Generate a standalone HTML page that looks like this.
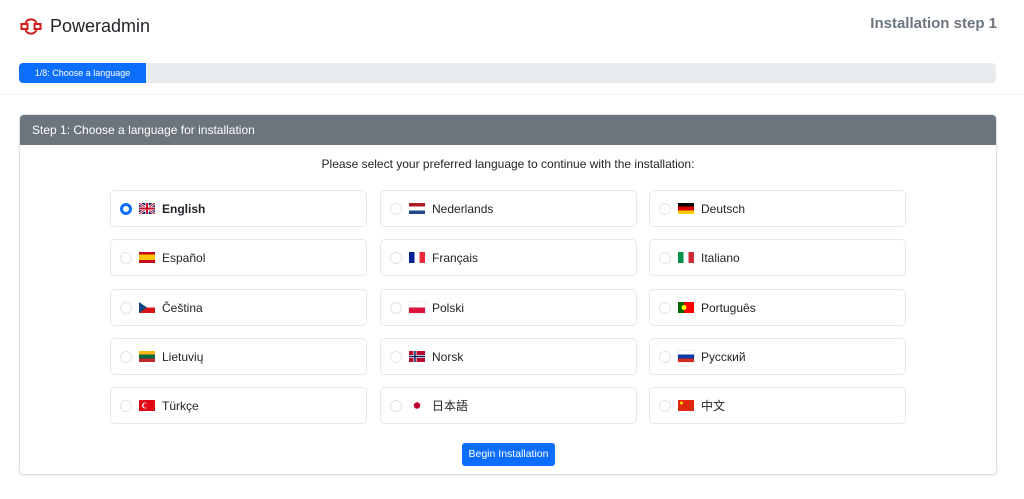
<!DOCTYPE html>
<html><head><meta charset="utf-8"><style>
*{box-sizing:border-box;margin:0;padding:0}
body{width:1024px;height:499px;background:#fff;font-family:"Liberation Sans","Noto Sans CJK SC",sans-serif;color:#212529;position:relative;overflow:hidden}
.logo{position:absolute;left:20px;top:15px}
.brand{position:absolute;left:50px;top:16px;font-size:18px;color:#212529}
.step{position:absolute;right:27px;top:15px;font-size:15px;font-weight:bold;color:#6c757d}
.prog{position:absolute;left:19px;top:63px;width:977px;height:20px;background:#e9ecef;border-radius:4px;overflow:hidden}
.prog div{width:127px;height:100%;background:#0d6efd;color:#fff;font-size:9px;text-align:center;line-height:20px}
.hr{position:absolute;left:0;right:0;top:94px;border-top:1px solid #f1f2f4}
.card{position:absolute;left:19px;top:114px;width:978px;height:361px;border:1px solid #dee2e6;border-radius:5px;overflow:hidden;box-shadow:0 1px 3px rgba(0,0,0,.08)}
.ch{height:30px;background:#6c757d;color:#fff;font-size:12px;line-height:30px;padding-left:12px}
.intro{position:absolute;top:42px;left:0;right:0;text-align:center;font-size:12px}
.opt{position:absolute;width:257px;height:37px;border:1px solid #e5e8eb;border-radius:5px;font-size:12px;display:flex;align-items:center;padding-left:9px}
.r{width:12px;height:12px;border:1px solid #e2e5e8;border-radius:50%;margin-right:7px}
.r.on{border:3.5px solid #0d6efd}
.f{width:16px;height:11px;margin-right:7px;display:inline-block}
.btn{position:absolute;left:442px;top:328px;width:93px;height:23px;background:#0d6efd;color:#fff;font-size:10.5px;text-align:center;line-height:23px;border-radius:3px}
</style></head><body>
<svg class="logo" width="22" height="22" viewBox="0 0 22 22" fill="none" stroke="#d21b1b" stroke-width="2"><path d="M5.5 8 A6 6 0 0 1 16.5 8"/><path d="M5.5 15 A6 6 0 0 0 16.5 15"/><rect x="1.5" y="9" width="6" height="5"/><rect x="14.5" y="9" width="6" height="5"/></svg>
<div class="brand">Poweradmin</div>
<div class="step">Installation step 1</div>
<div class="prog"><div>1/8: Choose a language</div></div>
<div class="hr"></div>
<div class="card"><div class="ch">Step 1: Choose a language for installation</div>
<div class="intro">Please select your preferred language to continue with the installation:</div>
<div class="opt" style="left:90px;top:75px"><span class="r on"></span><svg class="f" viewBox="0 0 16 11"><rect width="16" height="11" fill="#012169"/><path d="M0 0L16 11M16 0L0 11" stroke="#fff" stroke-width="2.5"/><path d="M0 0L16 11M16 0L0 11" stroke="#c8102e" stroke-width="1"/><path d="M8 0V11M0 5.5H16" stroke="#fff" stroke-width="3.5"/><path d="M8 0V11M0 5.5H16" stroke="#c8102e" stroke-width="2"/></svg><b>English</b></div>
<div class="opt" style="left:360px;top:75px"><span class="r"></span><span class="f" style="background:linear-gradient(#ae1c28 33%,#fff 33% 66%,#21468b 66%)"></span>Nederlands</div>
<div class="opt" style="left:629px;top:75px"><span class="r"></span><span class="f" style="background:linear-gradient(#000 33%,#d00 33% 66%,#ffce00 66%)"></span>Deutsch</div>
<div class="opt" style="left:90px;top:124px"><span class="r"></span><span class="f" style="background:linear-gradient(#c60b1e 25%,#ffc400 25% 75%,#c60b1e 75%)"></span>Español</div>
<div class="opt" style="left:360px;top:124px"><span class="r"></span><span class="f" style="background:linear-gradient(90deg,#002395 33%,#fff 33% 66%,#ed2939 66%)"></span>Français</div>
<div class="opt" style="left:629px;top:124px"><span class="r"></span><span class="f" style="background:linear-gradient(90deg,#009246 33%,#fff 33% 66%,#ce2b37 66%)"></span>Italiano</div>
<div class="opt" style="left:90px;top:174px"><span class="r"></span><svg class="f" viewBox="0 0 16 11"><rect width="16" height="5.5" fill="#fff"/><rect y="5.5" width="16" height="5.5" fill="#d7141a"/><path d="M0 0L8 5.5L0 11Z" fill="#11457e"/></svg>Čeština</div>
<div class="opt" style="left:360px;top:174px"><span class="r"></span><span class="f" style="background:linear-gradient(#fff 50%,#dc143c 50%);box-shadow:0 0 0 .5px #ddd"></span>Polski</div>
<div class="opt" style="left:629px;top:174px"><span class="r"></span><svg class="f" viewBox="0 0 16 11"><rect width="16" height="11" fill="#f00"/><rect width="6" height="11" fill="#060"/><circle cx="6" cy="5.5" r="2.5" fill="#ff0"/></svg>Português</div>
<div class="opt" style="left:90px;top:223px"><span class="r"></span><span class="f" style="background:linear-gradient(#fdb913 33%,#006a44 33% 66%,#c1272d 66%)"></span>Lietuvių</div>
<div class="opt" style="left:360px;top:223px"><span class="r"></span><svg class="f" viewBox="0 0 16 11"><rect width="16" height="11" fill="#ba0c2f"/><path d="M6 0V11M0 5.5H16" stroke="#fff" stroke-width="3"/><path d="M6 0V11M0 5.5H16" stroke="#00205b" stroke-width="1.5"/></svg>Norsk</div>
<div class="opt" style="left:629px;top:223px"><span class="r"></span><span class="f" style="background:linear-gradient(#fff 33%,#0039a6 33% 66%,#d52b1e 66%);box-shadow:0 0 0 .5px #ddd"></span>Русский</div>
<div class="opt" style="left:90px;top:272px"><span class="r"></span><svg class="f" viewBox="0 0 16 11"><rect width="16" height="11" fill="#e30a17"/><circle cx="6" cy="5.5" r="3" fill="#fff"/><circle cx="6.8" cy="5.5" r="2.4" fill="#e30a17"/></svg>Türkçe</div>
<div class="opt" style="left:360px;top:272px"><span class="r"></span><svg class="f" viewBox="0 0 16 11"><rect width="16" height="11" fill="#fff"/><circle cx="8" cy="5.5" r="3.2" fill="#bc002d"/></svg>日本語</div>
<div class="opt" style="left:629px;top:272px"><span class="r"></span><svg class="f" viewBox="0 0 16 11"><rect width="16" height="11" fill="#de2910"/><circle cx="3.5" cy="3" r="1.5" fill="#ffde00"/></svg>中文</div>
<div class="btn">Begin Installation</div>
</div>
</body></html>
